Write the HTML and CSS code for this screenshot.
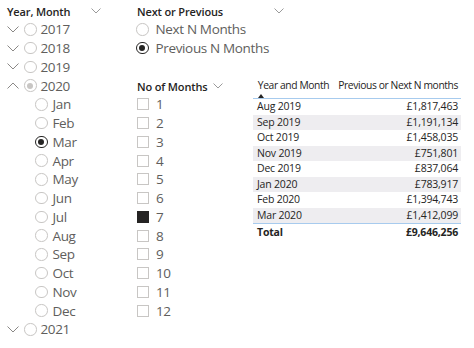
FILE: index.html
```html
<!DOCTYPE html>
<html>
<head>
<meta charset="utf-8">
<link rel="stylesheet" href="styles.css">
</head>
<body>
<div class="page">
  <section class="slicer s-year">
    <div class="s-head"><span>Year, Month</span><svg class="hchev" width="10" height="6" viewBox="0 0 10 6"><path d="M0.5 0.5 L5 5 L9.5 0.5" /></svg></div>
    <ul class="list">
      <li class="row year"><svg class="ychev" width="12" height="7" viewBox="0 0 12 7"><path d="M0.5 0.5 L6 6 L11.5 0.5"/></svg><span class="radio"></span><span>2017</span></li>
      <li class="row year"><svg class="ychev" width="12" height="7" viewBox="0 0 12 7"><path d="M0.5 0.5 L6 6 L11.5 0.5"/></svg><span class="radio"></span><span>2018</span></li>
      <li class="row year"><svg class="ychev" width="12" height="7" viewBox="0 0 12 7"><path d="M0.5 0.5 L6 6 L11.5 0.5"/></svg><span class="radio"></span><span>2019</span></li>
      <li class="row year"><svg class="ychev" width="12" height="7" viewBox="0 0 12 7"><path d="M0.5 6.5 L6 1 L11.5 6.5"/></svg><span class="radio partial"></span><span>2020</span></li>
      <li class="row month"><span class="radio"></span><span>Jan</span></li>
      <li class="row month"><span class="radio"></span><span>Feb</span></li>
      <li class="row month"><span class="radio on"></span><span>Mar</span></li>
      <li class="row month"><span class="radio"></span><span>Apr</span></li>
      <li class="row month"><span class="radio"></span><span>May</span></li>
      <li class="row month"><span class="radio"></span><span>Jun</span></li>
      <li class="row month"><span class="radio"></span><span>Jul</span></li>
      <li class="row month"><span class="radio"></span><span>Aug</span></li>
      <li class="row month"><span class="radio"></span><span>Sep</span></li>
      <li class="row month"><span class="radio"></span><span>Oct</span></li>
      <li class="row month"><span class="radio"></span><span>Nov</span></li>
      <li class="row month"><span class="radio"></span><span>Dec</span></li>
      <li class="row year"><svg class="ychev" width="12" height="7" viewBox="0 0 12 7"><path d="M0.5 0.5 L6 6 L11.5 0.5"/></svg><span class="radio"></span><span>2021</span></li>
    </ul>
  </section>

  <section class="slicer s-np">
    <div class="s-head"><span>Next or Previous</span><svg class="hchev" width="10" height="6" viewBox="0 0 10 6"><path d="M0.5 0.5 L5 5 L9.5 0.5" /></svg></div>
    <ul class="list">
      <li class="row opt"><span class="radio"></span><span>Next N Months</span></li>
      <li class="row opt"><span class="radio on"></span><span>Previous N Months</span></li>
    </ul>
  </section>

  <section class="slicer s-num">
    <div class="s-head"><span>No of Months</span><svg class="hchev" width="10" height="6" viewBox="0 0 10 6"><path d="M0.5 0.5 L5 5 L9.5 0.5" /></svg></div>
    <ul class="list">
      <li class="row opt"><span class="check"></span><span>1</span></li>
      <li class="row opt"><span class="check"></span><span>2</span></li>
      <li class="row opt"><span class="check"></span><span>3</span></li>
      <li class="row opt"><span class="check"></span><span>4</span></li>
      <li class="row opt"><span class="check"></span><span>5</span></li>
      <li class="row opt"><span class="check"></span><span>6</span></li>
      <li class="row opt"><span class="check on"></span><span>7</span></li>
      <li class="row opt"><span class="check"></span><span>8</span></li>
      <li class="row opt"><span class="check"></span><span>9</span></li>
      <li class="row opt"><span class="check"></span><span>10</span></li>
      <li class="row opt"><span class="check"></span><span>11</span></li>
      <li class="row opt"><span class="check"></span><span>12</span></li>
    </ul>
  </section>

  <section class="tbl-wrap">
    <table class="tbl">
      <thead>
        <tr><th class="c1">Year and Month<span class="sort"></span></th><th class="c2">Previous or Next N months</th></tr>
      </thead>
      <tbody>
        <tr><td class="c1">Aug 2019</td><td class="c2">£1,817,463</td></tr>
        <tr class="alt"><td class="c1">Sep 2019</td><td class="c2">£1,191,134</td></tr>
        <tr><td class="c1">Oct 2019</td><td class="c2">£1,458,035</td></tr>
        <tr class="alt"><td class="c1">Nov 2019</td><td class="c2">£751,801</td></tr>
        <tr><td class="c1">Dec 2019</td><td class="c2">£837,064</td></tr>
        <tr class="alt"><td class="c1">Jan 2020</td><td class="c2">£783,917</td></tr>
        <tr><td class="c1">Feb 2020</td><td class="c2">£1,394,743</td></tr>
        <tr class="alt last"><td class="c1">Mar 2020</td><td class="c2">£1,412,099</td></tr>
      </tbody>
      <tfoot>
        <tr><td class="c1">Total</td><td class="c2">£9,646,256</td></tr>
      </tfoot>
    </table>
  </section>
</div>
</body>
</html>
```

FILE: styles.css
```css
* { box-sizing: border-box; }
html, body { margin: 0; padding: 0; background: #ffffff; }
body {
  width: 474px;
  height: 348px;
  overflow: hidden;
  font-family: "Open Sans", "Noto Sans", sans-serif;
  color: #252423;
}
ul { list-style: none; margin: 0; padding: 0; }

.page {
  display: grid;
  grid-template-columns: 130px 115px 1fr;
  grid-template-rows: 75px auto;
}

.slicer { padding-top: 2px; }
.s-year { grid-column: 1; grid-row: 1 / span 2; }
.s-np { grid-column: 2 / span 2; grid-row: 1; width: 160px; padding-left: 7px; }
.s-num { grid-column: 2; grid-row: 2; padding-left: 7px; }

.s-head {
  height: 18px;
  display: flex;
  align-items: center;
  justify-content: space-between;
  font-size: 11px;
  font-weight: 600;
  letter-spacing: -0.15px;
  color: #252423;
}
.s-year .s-head { padding-left: 7px; width: 101px; }
.s-np .s-head { width: 147px; }
.s-num .s-head { width: 86px; }

.hchev { fill: none; stroke: #9a9a9a; stroke-width: 1; }
.ychev { fill: none; stroke: #8a8886; stroke-width: 1; flex: none; }

.row {
  height: 18.75px;
  display: flex;
  align-items: center;
  font-size: 13.5px;
  letter-spacing: -0.35px;
  color: #605e5c;
}
.row.year { padding-left: 7px; }
.row.year .ychev { margin-right: 5px; }
.row.year .radio { margin-right: 4px; }
.row.month { padding-left: 35px; }
.row.month .radio { margin-right: 5px; }
.s-np .row .radio { margin-right: 7px; margin-left: -1px; }

.radio {
  width: 12.5px;
  height: 12.5px;
  flex: none;
  border-radius: 50%;
  border: 1px solid #c8c6c4;
  background: #fff;
  position: relative;
}
.radio.on { border-color: #252423; }
.radio.on::after,
.radio.partial::after {
  content: "";
  position: absolute;
  left: 2.25px; top: 2.25px;
  width: 6px; height: 6px;
  border-radius: 50%;
  background: #252423;
}
.radio.partial::after { background: #c8c6c4; }

.check {
  width: 12px;
  height: 12px;
  flex: none;
  border: 1px solid #c8c6c4;
  background: #fff;
  margin-right: 7px;
}
.check.on { background: #252423; border-color: #252423; }

.tbl-wrap { grid-column: 3; grid-row: 2; padding-left: 8px; }
.tbl {
  width: 208px;
  table-layout: fixed;
  border-collapse: collapse;
  font-size: 10.5px;
  letter-spacing: -0.2px;
  color: #252423;
}
.tbl th {
  font-weight: 400;
  height: 23.5px;
  vertical-align: top;
  padding: 3px 3px 0 4px;
  line-height: 14px;
  font-size: 10.3px;
  letter-spacing: -0.4px;
  border-bottom: 1px solid #a7cbee;
  white-space: nowrap;
  overflow: visible;
}
.tbl th.c1 { width: 80px; }
.tbl th.c2 { padding-left: 0; text-align: right; }
.sort {
  display: block;
  width: 0; height: 0;
  margin-top: 2px;
  margin-left: 1px;
  border-left: 3px solid transparent;
  border-right: 3px solid transparent;
  border-bottom: 4px solid #252423;
}
.tbl td {
  height: 15.5px;
  line-height: 15.5px;
  padding: 0 3px 0 4px;
  white-space: nowrap;
}
.tbl .c2 { text-align: right; }
.tbl tr.alt td { background: #eeedf0; }
.tbl tr.last td { border-bottom: 1.5px solid #a7cbee; }
.tbl tfoot td {
  font-weight: 700;
  height: 17px;
  line-height: 17px;
}
```
